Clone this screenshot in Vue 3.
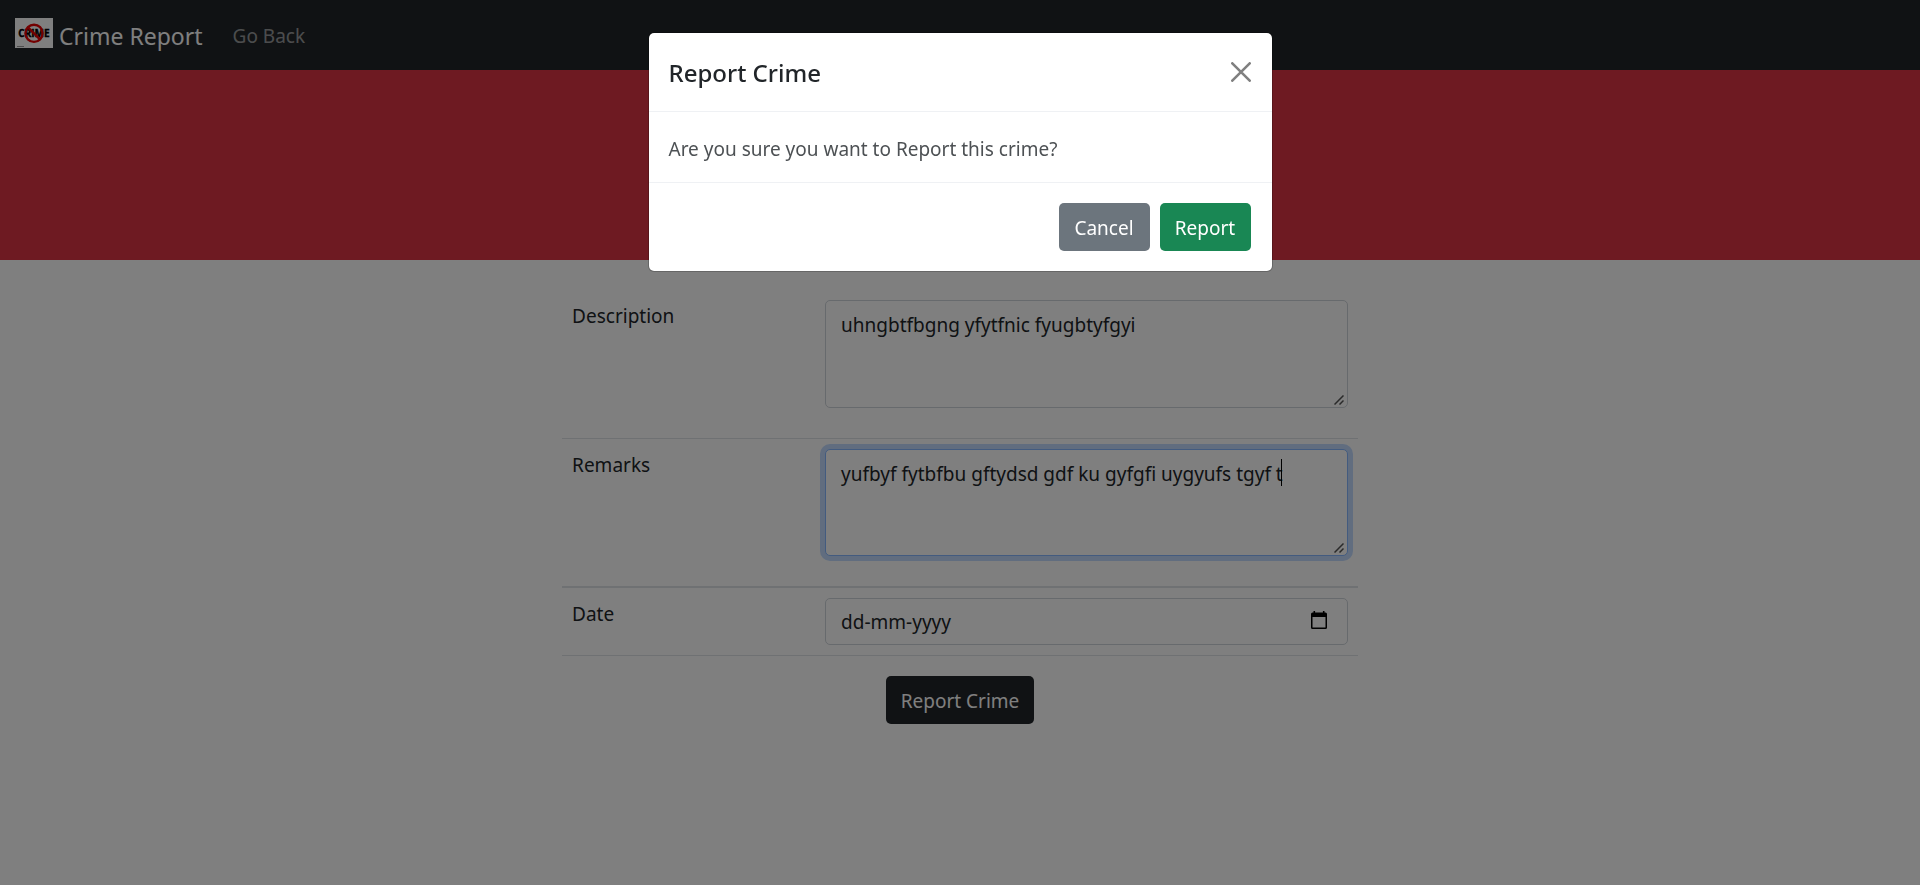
<script setup>
import { ref } from 'vue'

const description = ref('uhngbtfbgng yfytfnic fyugbtyfgyi')
const remarks = ref('yufbyf fytbfbu gftydsd gdf ku gyfgfi uygyufs tgyf t')
const date = ref('')
const open = ref(true)
</script>

<template>
  <div class="page">
    <nav class="navbar">
      <a class="brand" href="#">
        <svg class="logo" viewBox="0 0 38 30" aria-hidden="true">
          <rect width="38" height="30" fill="#fff" />
          <text x="19" y="19" text-anchor="middle" class="logo-text">CRIME</text>
          <circle cx="19" cy="15.3" r="8.6" fill="none" stroke="#e60000" stroke-width="2.4" />
          <path d="M13 9.3 25 21.3" stroke="#e60000" stroke-width="2.4" />
          <path d="M2 28.500h7" stroke="#999" stroke-width="1" />
        </svg>
        <span>Crime Report</span>
      </a>
      <a class="nav-link" href="#">Go Back</a>
    </nav>
    <header class="banner"></header>

    <form class="report" @submit.prevent="open = true">
      <table class="fields">
        <tbody>
          <tr>
            <th scope="row"><label for="description">Description</label></th>
            <td>
              <div class="wrap">
                <textarea id="description" v-model="description" class="control area" spellcheck="false"></textarea>
                <svg class="grip" viewBox="0 0 10 10" aria-hidden="true"><path d="M.5 9.500 9.500.5M5.500 9.500l4-4" /></svg>
              </div>
            </td>
          </tr>
          <tr class="thick">
            <th scope="row"><label for="remarks">Remarks</label></th>
            <td>
              <div class="wrap">
                <textarea id="remarks" v-model="remarks" class="control area active" spellcheck="false"></textarea>
                <svg class="grip" viewBox="0 0 10 10" aria-hidden="true"><path d="M.5 9.500 9.500.5M5.500 9.500l4-4" /></svg>
                <span class="caret"></span>
              </div>
            </td>
          </tr>
          <tr>
            <th scope="row"><label for="date">Date</label></th>
            <td>
              <div class="control date">
                <input id="date" v-model="date" type="text" placeholder="dd-mm-yyyy" />
                <button type="button" class="picker" aria-label="Show date picker">
                  <svg viewBox="0 0 16 18" aria-hidden="true">
                    <path d="M2.500 0h1.600v1.500h7.800V0h1.600v1.500h1A1.500 1.500 0 0 1 16 3v13.500a1.500 1.500 0 0 1-1.500 1.500h-13A1.500 1.500 0 0 1 0 16.500V3a1.500 1.500 0 0 1 1.500-1.500h1zM1.500 6v10.500h13V6z" fill="#000" fill-rule="evenodd" />
                  </svg>
                </button>
              </div>
            </td>
          </tr>
        </tbody>
      </table>
      <button type="submit" class="btn dark">Report Crime</button>
    </form>

    <div v-if="open" class="backdrop">
      <section class="modal" role="dialog" aria-modal="true" aria-labelledby="modal-title">
        <div class="modal-head">
          <h5 id="modal-title">Report Crime</h5>
          <button type="button" class="close" aria-label="Close" @click="open = false">
            <svg viewBox="0 0 20 20" aria-hidden="true">
              <path d="M1.300 1.300 18.700 18.700M18.700 1.300 1.300 18.700" stroke="#808080" stroke-width="2.600" stroke-linecap="round" />
            </svg>
          </button>
        </div>
        <p class="modal-body">Are you sure you want to Report this crime?</p>
        <div class="modal-foot">
          <button type="button" class="btn grey" @click="open = false">Cancel</button>
          <button type="button" class="btn green" @click="open = false">Report</button>
        </div>
      </section>
    </div>
  </div>
</template>

<style>
body {
  margin: 0;
  background: #fff;
}
</style>

<style scoped>
.page,
.page * {
  box-sizing: border-box;
}
.page {
  min-height: 100vh;
  font: 19px/30px "Noto Sans", "Open Sans", sans-serif;
  color: #212529;
}
.navbar {
  display: flex;
  align-items: center;
  gap: 30px;
  height: 70px;
  padding: 2px 15px 0;
  background: #212529;
}
.brand {
  display: flex;
  align-items: center;
  gap: 6px;
  font-size: 23px;
  line-height: 38px;
  color: #fff;
  text-decoration: none;
}
.logo {
  width: 38px;
  height: 30px;
  margin-bottom: 6px;
}
.logo-text {
  font: bold 10px "Liberation Sans Narrow", "Open Sans", sans-serif;
  fill: #000;
  stroke: #000;
  stroke-width: 0.4px;
}
.nav-link {
  color: rgba(255, 255, 255, 0.55);
  text-decoration: none;
}
.banner {
  height: 190px;
  background: #dc3545;
}
.report {
  display: flex;
  flex-direction: column;
  align-items: center;
  gap: 20px;
  padding-top: 30px;
}
.fields {
  width: 41.45%;
  border-collapse: separate;
  border-spacing: 0;
}
.fields th,
.fields td {
  padding: 10px;
  vertical-align: top;
  border-bottom: 1px solid #dee2e6;
}
.fields .thick th,
.fields .thick td {
  border-bottom-width: 2px;
}
.fields th {
  width: 253px;
  text-align: left;
  font-weight: 400;
}
.fields label {
  display: block;
  padding-top: 1px;
}
.control {
  display: block;
  width: 100%;
  border: 1px solid #ced4da;
  border-radius: 5px;
  background: #fff;
  color: #212529;
  font: inherit;
}
.area {
  height: 108px;
  padding: 9px 15px 8px;
  margin-bottom: 20px;
  resize: vertical;
  outline: none;
}
.area::-webkit-resizer {
  background: transparent;
}
.active {
  height: 107px;
  border-color: #86b7fe;
  box-shadow: 0 0 0 5px rgba(13, 110, 253, 0.25);
}
.wrap {
  position: relative;
}
.grip {
  position: absolute;
  right: 4px;
  bottom: 3px;
  width: 10px;
  height: 10px;
  fill: none;
  stroke: #555;
  stroke-width: 1.5px;
  pointer-events: none;
}
.caret {
  position: absolute;
  top: 10px;
  left: 456px;
  width: 1px;
  height: 27px;
  background: #000;
}
.date {
  display: flex;
  align-items: center;
  height: 47px;
  padding: 0 20px 0 15px;
}
.date input {
  flex: 1;
  min-width: 0;
  padding: 0;
  border: 0;
  outline: 0;
  background: none;
  font: inherit;
  color: #212529;
}
.date input::placeholder {
  color: #212529;
  opacity: 1;
}
.picker,
.close {
  display: block;
  padding: 0;
  border: 0;
  background: none;
}
.picker {
  padding-bottom: 3px;
}
.picker svg {
  display: block;
  width: 16px;
  height: 18px;
}
.btn {
  height: 48px;
  min-width: 91px;
  padding: 1px 15px 0;
  border: 0;
  border-radius: 5px;
  font: inherit;
  color: #fff;
}
.dark {
  background: #212529;
}
.grey {
  background: #6c757d;
}
.green {
  background: #198754;
}
.backdrop {
  position: fixed;
  inset: 0;
  padding-top: 32px;
  background: rgba(0, 0, 0, 0.5);
}
.modal {
  width: 100%;
  max-width: 625px;
  margin: 0 auto;
  border: 1px solid rgba(0, 0, 0, 0.2);
  border-radius: 6px;
  background: #fff;
  background-clip: padding-box;
}
.modal-head {
  display: flex;
  align-items: center;
  justify-content: space-between;
  height: 79px;
  padding: 0 21px 0 20px;
  border-bottom: 1px solid #eff1f4;
}
.modal-head h5 {
  margin: 0;
  padding-top: 2px;
  font-size: 24px;
  line-height: 38px;
  font-weight: 500;
}
.close svg {
  display: block;
  width: 20px;
  height: 20px;
}
.modal-body {
  margin: 0;
  padding: 22px 20px 18px;
  color: #4d5154;
}
.modal-foot {
  display: flex;
  justify-content: flex-end;
  gap: 10px;
  padding: 20px 21px 20px 20px;
  border-top: 1px solid #eff1f4;
}
</style>
